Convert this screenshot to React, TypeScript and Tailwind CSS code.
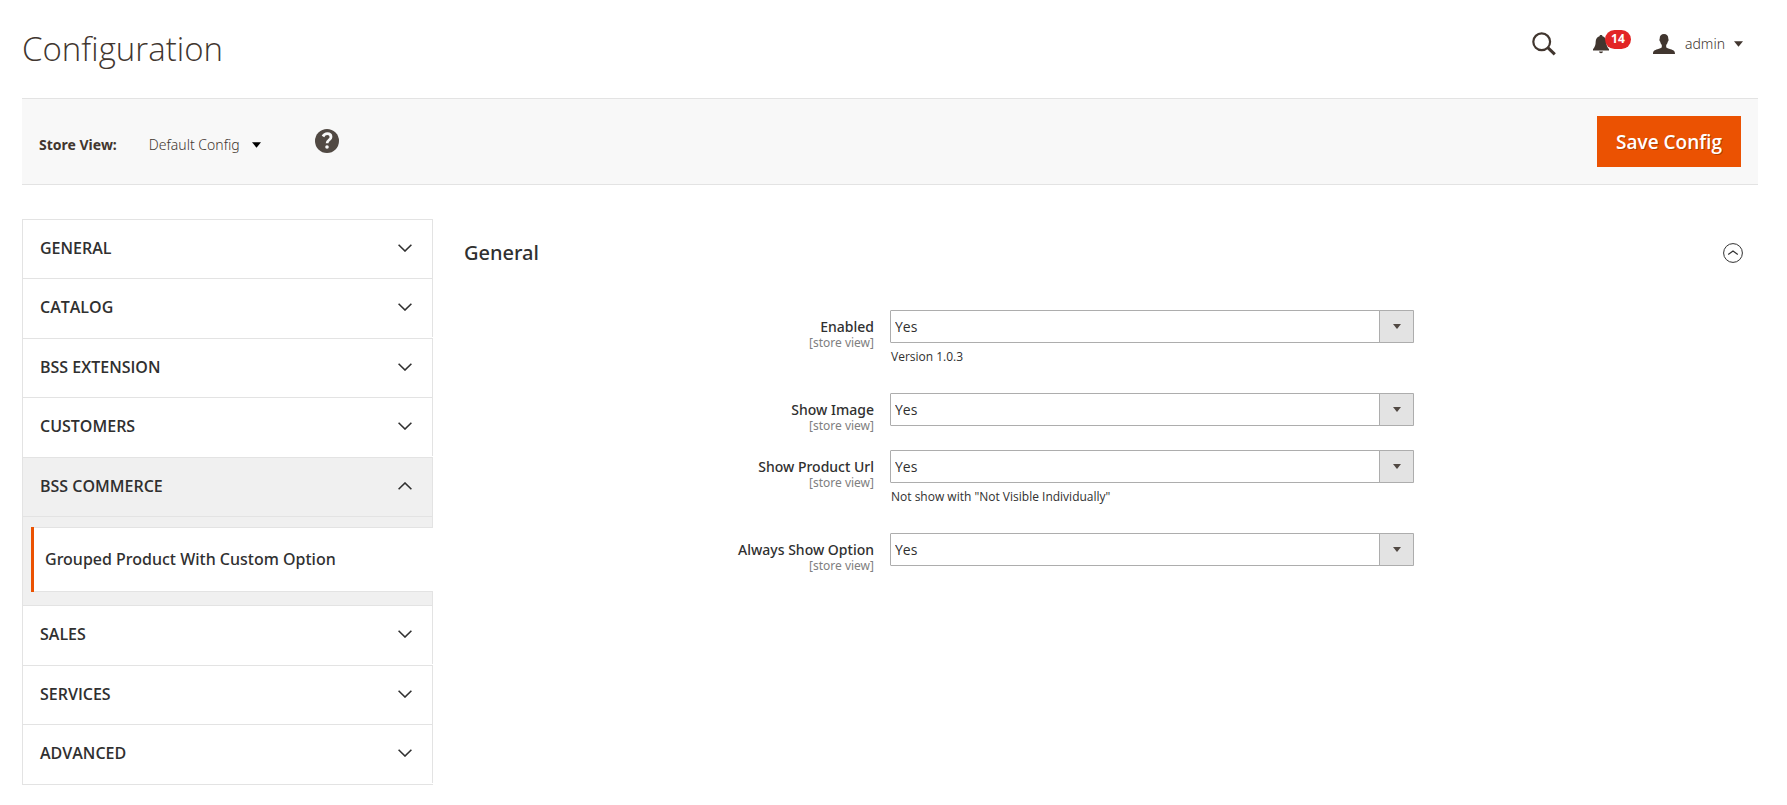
import { useState } from "react";

type Section = {
    title: string;
    items?: string[];
};

type Field = {
    id: string;
    label: string;
    note?: string;
};

const sections: Section[] = [
    { title: "General" },
    { title: "Catalog" },
    { title: "BSS Extension" },
    { title: "Customers" },
    { title: "BSS Commerce", items: ["Grouped Product With Custom Option"] },
    { title: "Sales" },
    { title: "Services" },
    { title: "Advanced" },
];

const fields: Field[] = [
    { id: "enabled", label: "Enabled", note: "Version 1.0.3" },
    { id: "show_image", label: "Show Image" },
    { id: "show_product_url", label: "Show Product Url", note: 'Not show with "Not Visible Individually"' },
    { id: "always_show_option", label: "Always Show Option" },
];

function Caret({ className }: { className: string }) {
    return (
        <svg viewBox="0 0 10 6" className={className} fill="currentColor" aria-hidden="true">
            <path d="M0 0h10L5 6z" />
        </svg>
    );
}

function Header() {
    return (
        <header className="flex items-start justify-between py-6">
            <h1 className="text-[33px] leading-[50px] font-light text-[#41362f]">Configuration</h1>

            <div className="flex items-center pt-2 pr-[15px] text-[#41362f]">
                <button type="button" aria-label="Search" className="mr-9">
                    <svg viewBox="0 0 24 24" className="w-6 h-6" fill="none" stroke="currentColor">
                        <circle cx="9.7" cy="9.8" r="8.4" strokeWidth="2.2" />
                        <path d="M15.8 15.6l7 6.8" strokeWidth="3" />
                    </svg>
                </button>

                <button type="button" aria-label="Notifications" className="relative mr-[43px]">
                    <svg viewBox="0 0 18 20" className="w-[18px] h-5" fill="currentColor">
                        <path d="M9 1c.9 0 1.4.5 1.5 1.2C13 2.9 14.2 4.8 14.3 7.5c.1 3.5.7 5.6 2.7 7.7v1.3H1v-1.3c2-2.1 2.6-4.2 2.7-7.7C3.8 4.8 5 2.9 7.5 2.2 7.6 1.5 8.1 1 9 1z" />
                        <path d="M7 17.5h4c-.2 1-.9 1.7-2 1.7s-1.8-.7-2-1.7z" />
                    </svg>
                    <span className="absolute -top-1 left-[13px] w-[26px] h-[19px] rounded-full bg-[#e22626] text-white text-xs leading-[18px] font-bold">
                        14
                    </span>
                </button>

                <button type="button" className="flex items-center text-sm font-['Noto_Sans'] font-light">
                    <svg viewBox="0 0 22 20" className="w-[22px] h-5 mr-[10px]" fill="currentColor" aria-hidden="true">
                        <path d="M11 0c2.7 0 4.3 1.7 4.3 4.5 0 .5.3.7.3 1.5s-.4 1.3-.7 1.5c-.3 1.5-.9 2.6-1.7 3.4v2.3c.4.9 2.2 1.3 4.4 2 2.8.9 4.4 1.5 4.4 4.8H0c0-3.3 1.6-3.9 4.4-4.8 2.2-.7 4-1.1 4.4-2v-2.3C8 10.1 7.4 9 7.1 7.5c-.3-.2-.7-.7-.7-1.5s.3-1 .3-1.5C6.7 1.7 8.3 0 11 0z" />
                    </svg>
                    admin
                    <Caret className="w-[9px] h-[6px] ml-[9px]" />
                </button>
            </div>
        </header>
    );
}

function Toolbar() {
    return (
        <div className="flex items-center justify-between bg-[#f8f8f8] border-y border-[#e3e3e3] px-[17px] py-[17px]">
            <div className="flex items-center text-sm font-['Noto_Sans'] text-[#41362f]">
                <span className="font-bold pt-[6px] mr-8">Store View:</span>
                <button type="button" className="flex items-center pt-[6px] font-light">
                    Default Config
                    <Caret className="w-[9px] h-[6px] ml-3 text-black" />
                </button>
                <a href="#help" aria-label="Help" className="ml-[54px] pb-px">
                    <svg viewBox="0 0 24 24" className="w-6 h-6" aria-hidden="true">
                        <circle cx="12" cy="12" r="12" fill="#514943" />
                        <path d="M8 7.5c1-2 2.5-2.8 4.3-2.8 2.2 0 3.7 1.3 3.7 3.2 0 3.2-3.9 3-3.9 6.3" fill="none" stroke="#f8f8f8" strokeWidth="2.8" />
                        <circle cx="12" cy="18" r="1.8" fill="#f8f8f8" />
                    </svg>
                </a>
            </div>

            <button
                type="button"
                className="px-[19px] pt-[13px] pb-[11px] bg-[#eb5202] text-white text-[19px] leading-[27px] font-semibold [text-shadow:1px_1px_0_rgba(0,0,0,0.25)]"
            >
                Save Config
            </button>
        </div>
    );
}

function Sidebar() {
    const [open, setOpen] = useState("BSS Commerce");

    return (
        <nav className="w-[411px] shrink-0">
            <ul className="border-t border-[#e3e3e3]">
                {sections.map((section) => {
                    const isOpen = open === section.title;

                    return (
                        <li key={section.title} className="even:pb-px border-b border-l border-[#e3e3e3]">
                            <button
                                type="button"
                                aria-expanded={isOpen}
                                onClick={() => setOpen(isOpen ? "" : section.title)}
                                className={`flex items-center justify-between w-full pl-[17px] pr-5 pt-[17px] pb-[19px] border-r border-[#e3e3e3] text-base leading-[22px] font-semibold uppercase text-[#303030]
                                ${isOpen ? "bg-[#f0f0f0]" : "bg-white"}`}
                            >
                                {section.title}
                                <svg viewBox="0 0 14 8" className={`w-[14px] h-2 ${isOpen ? "rotate-180" : ""}`}
                                    fill="none" stroke="currentColor" strokeWidth="1.6">
                                    <path d="M.6.8L7 7 13.4.8" />
                                </svg>
                            </button>

                            {isOpen && section.items && (
                                <ul className="bg-[#f0f0f0] border-t border-[#e3e3e3]">
                                    <li className="h-[10px] border-r border-[#e3e3e3]" />
                                    {section.items.map((item) => (
                                        <li key={item} className="pl-2">
                                            <a
                                                href="#section"
                                                aria-current="page"
                                                className="block bg-white border-y border-[#e3e3e3] text-base leading-[21px] font-['Noto_Sans'] font-medium text-[#303030]"
                                            >
                                                <span className="block -my-px pl-[11px] py-[22px] border-l-3 border-[#eb5202]">{item}</span>
                                            </a>
                                        </li>
                                    ))}
                                    <li className="h-[13px] border-r border-[#e3e3e3]" />
                                </ul>
                            )}
                        </li>
                    );
                })}
            </ul>
        </nav>
    );
}

function FieldRow({ field }: { field: Field }) {
    return (
        <div className="grid grid-cols-[410px_524px] gap-x-4">
            <label htmlFor={field.id} className="pt-[9px] text-right text-sm leading-4 font-['Noto_Sans'] font-medium text-[#303030]">
                {field.label}
                <span className="block text-xs leading-4 font-normal text-[#808080]">[store view]</span>
            </label>

            <div>
                <div className="relative">
                    <select
                        id={field.id}
                        defaultValue="1"
                        className="block w-full h-[33px] pl-1 pr-10 appearance-none bg-white border border-[#adadad] rounded-[1px] text-sm text-[#303030]"
                    >
                        <option value="1">Yes</option>
                        <option value="0">No</option>
                    </select>
                    <span className="absolute inset-y-0 right-0 w-[35px] flex items-center justify-center bg-[#e3e3e3] border border-[#adadad] rounded-r-[1px] pointer-events-none">
                        <Caret className="w-[8px] h-[5px] text-[#514943]" />
                    </span>
                </div>
                {field.note && (
                    <p className="pl-px pt-[5px] pb-[11px] text-xs leading-[18px] text-[#303030]">{field.note}</p>
                )}
            </div>
        </div>
    );
}

export default function App() {
    const [open, setOpen] = useState(true);

    return (
        <div className="min-h-screen bg-white pl-[22px] pr-[29px] font-['Open_Sans',sans-serif]">
            <Header />
            <Toolbar />

            <div className="flex pt-[34px] pb-5">
                <Sidebar />

                <main className="flex-1 pl-[31px] pr-[15px] pt-5">
                    <button
                        type="button"
                        aria-expanded={open}
                        onClick={() => setOpen(!open)}
                        className="flex items-center justify-between w-full text-xl leading-[28px] font-['Noto_Sans'] font-medium text-[#303030]"
                    >
                        General
                        <svg viewBox="0 0 20 20" className={`w-5 h-5 ${open ? "" : "rotate-180"}`} fill="none" stroke="currentColor">
                            <circle cx="10" cy="10" r="9.4" />
                            <path d="M5.2 11.5L10 8l4.8 3.5" strokeWidth="1.2" />
                        </svg>
                    </button>

                    {open && (
                        <form className="flex flex-col gap-4 pt-[43px]">
                            {fields.map((field) => (
                                <FieldRow key={field.id} field={field} />
                            ))}
                        </form>
                    )}
                </main>
            </div>
        </div>
    );
}
